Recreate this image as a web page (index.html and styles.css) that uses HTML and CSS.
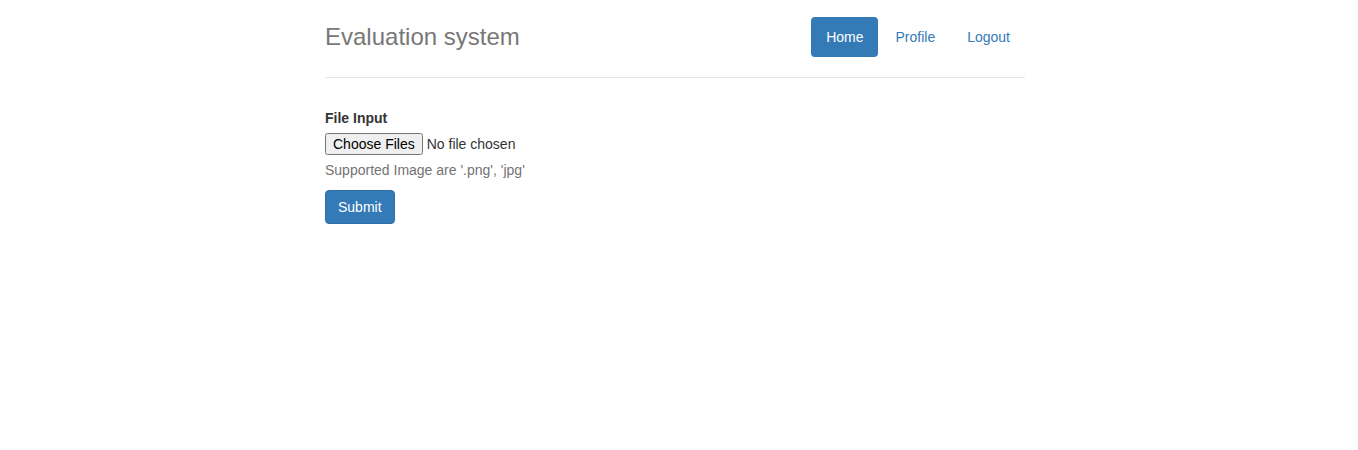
FILE: index.html
```html
<!DOCTYPE html>
<html>
<head>
<meta charset="utf-8">
<title>Evaluation system</title>
<link rel="stylesheet" href="styles.css">
</head>
<body>
<div class="container">
  <div class="header">
    <h3 class="brand">Evaluation system</h3>
    <ul class="nav-pills">
      <li><a href="#" class="active">Home</a></li>
      <li><a href="#">Profile</a></li>
      <li><a href="#">Logout</a></li>
    </ul>
  </div>
  <form class="upload-form">
    <div class="form-group">
      <label class="control-label" for="files">File Input</label>
      <input id="files" class="file-input" type="file" multiple>
      <p class="help-block">Supported Image are '.png', 'jpg'</p>
    </div>
    <button type="button" class="btn-primary">Submit</button>
  </form>
</div>
</body>
</html>
```

FILE: styles.css
```css
html, body {
  margin: 0;
  padding: 0;
  background: #fff;
}
body {
  font-family: "Liberation Sans", Arial, Helvetica, sans-serif;
  font-size: 14px;
  line-height: 20px;
  color: #333;
  padding-top: 17px;
}
.container {
  box-sizing: border-box;
  width: 738px;
  margin: 0 auto;
  padding: 0 23px 0 15px;
}
.header {
  display: flex;
  justify-content: space-between;
  align-items: center;
  padding-bottom: 20px;
  border-bottom: 1px solid #e5e5e5;
  margin-bottom: 30px;
}
.brand {
  margin: 0;
  font-size: 24px;
  font-weight: 500;
  line-height: 40px;
  color: #777;
}
.nav-pills {
  display: flex;
  list-style: none;
  margin: 0;
  padding: 0;
}
.nav-pills li {
  margin-left: 2px;
}
.nav-pills a {
  display: block;
  padding: 10px 15px;
  line-height: 20px;
  border-radius: 4px;
  color: #337ab7;
  text-decoration: none;
}
.nav-pills a.active {
  color: #fff;
  background-color: #337ab7;
}
.form-group {
  margin-bottom: 10px;
}
.control-label {
  display: block;
  font-weight: 700;
  margin-bottom: 5px;
}
.file-input {
  display: block;
  font-family: inherit;
  font-size: 14px;
  line-height: 20px;
  margin: 0;
}
.help-block {
  margin: 5px 0 0;
  color: #737373;
}
.btn-primary {
  display: inline-block;
  font-family: inherit;
  font-size: 14px;
  line-height: 20px;
  padding: 6px 12px;
  color: #fff;
  background-color: #337ab7;
  border: 1px solid #2e6da4;
  border-radius: 4px;
  cursor: pointer;
}
```
